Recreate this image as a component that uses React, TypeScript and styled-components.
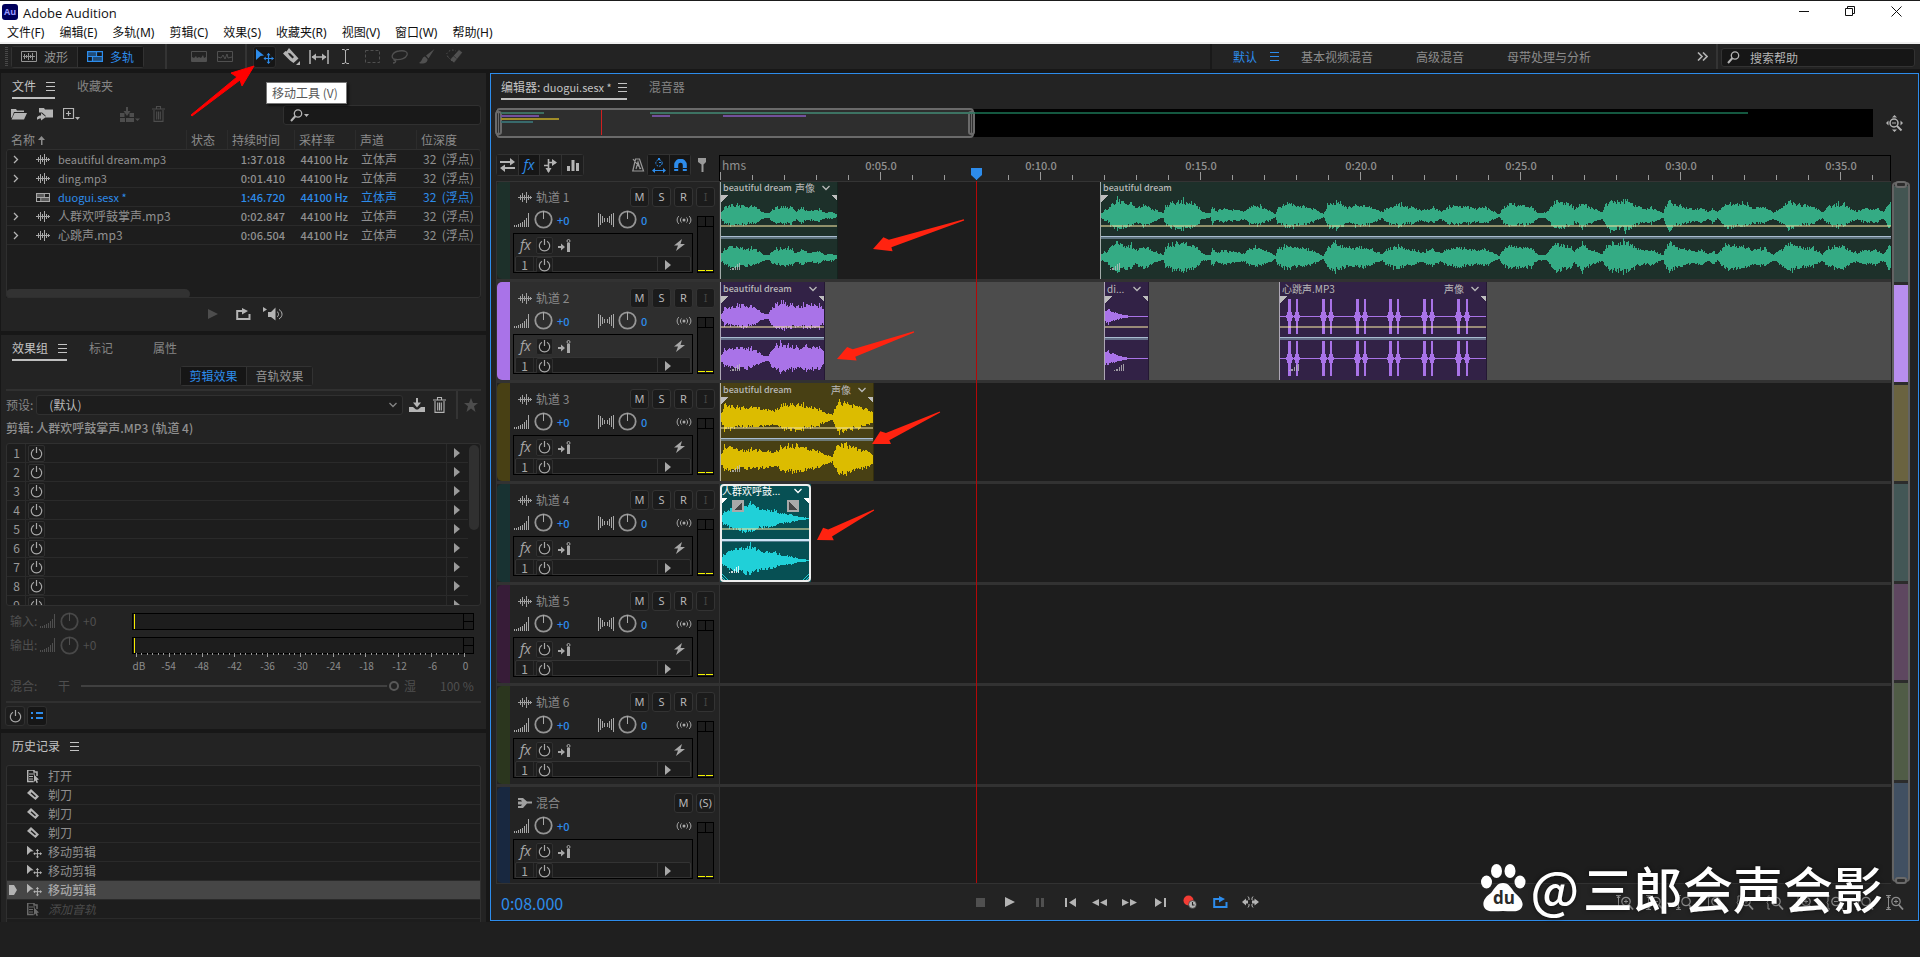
import React from 'react';
import styled, { createGlobalStyle, css } from 'styled-components';

const BLUE = '#2d8ceb';
const PX_PER_SECOND = 32;
const UI = '"Noto Sans CJK SC", "Noto Sans", sans-serif';

const GlobalStyle = createGlobalStyle`
  *, *::before, *::after { box-sizing: border-box; }
  body { margin: 0; background: #1f1f1f; color: #9a9a9a; font: 12px/18px ${UI}; }
  button, input, select { font: inherit; color: inherit; margin: 0; padding: 0; border: 0; background: none; border-radius: 0; }
  svg { display: block; flex: none; }
`;

/* ---------- icons ---------- */

type SvgProps = { w: number; h: number; children: React.ReactNode };
const Svg = ({ w, h, children }: SvgProps) => (
  <svg width={w} height={h} viewBox={`0 0 ${w} ${h}`} fill="currentColor" aria-hidden="true">{children}</svg>
);
const line = { fill: 'none', stroke: 'currentColor' } as const;

const MenuIcon = () => <Svg w={9} h={9}><path d="M0 0h9v1H0zM0 4h9v1H0zM0 8h9v1H0z" /></Svg>;
const Chevron = () => <Svg w={8} h={6}><path d="M.5 1l3.500 3.500L7.500 1" {...line} strokeWidth="1.300" /></Svg>;
const ChevronRight = () => <Svg w={6} h={9}><path d="M1 1l3.500 3.500L1 8" {...line} strokeWidth="1.300" /></Svg>;
const Power = () => <Svg w={13} h={13}><path d="M4 2.200a5.200 5.200 0 1 0 5 0M6.500 0v6" {...line} strokeWidth="1.200" /></Svg>;
const Triangle = () => <Svg w={6} h={10}><path d="M0 0l6 5-6 5z" /></Svg>;
const WaveSmall = () => <Svg w={14} h={11}><path d="M0 5h14v1H0zM2 3h1v5H2zM4 1h1v9H4zM6 3h1v5H6zM8 0h1v11H8zM10 3h1v5h-1zM12 4h1v3h-1z" /></Svg>;
const SessionIcon = ({ w = 14, h = 9 }) => (
  <svg width={w} height={h} viewBox="0 0 16 11" preserveAspectRatio="none" fill="none" stroke="currentColor" strokeWidth="1.200" aria-hidden="true">
    <path d="M.6.6h14.800v9.800H.6zM0 5.500h16M9.500 1v4M5.500 6v4" /><path d="M1 1h8v4H1zM6 6h9v4H6z" fill="currentColor" opacity=".45" stroke="none" />
  </svg>
);
const WaveBox = () => <Svg w={16} h={11}><path d="M.5.5h15v10H.5z" {...line} /><path d="M2 5h12v1H2zM3 3h1v5H3zM5 4h1v3H5zM7 2h1v7H7zM9 4h1v3H9zM11 2h1v7h-1z" /></Svg>;
const SpectrumBox = () => <Svg w={16} h={11}><path d="M.5.5h15v10H.5z" {...line} /><path d="M1 10V6l2 1 2-2 1 2 2-1 2 1 2-3 1 3 2-1v4z" /></Svg>;
const PitchBox = () => <Svg w={16} h={11}><path d="M.5.5h15v10H.5zM1 6l3 1 2-3 2 4 2-5 1 4 4-1" {...line} /></Svg>;
const MoveTool = ({ big = false }) => (
  <svg width={big ? 18 : 15} height={big ? 15 : 14} viewBox="0 0 18 15" fill="currentColor" aria-hidden="true">
    <path d="M0 0l8 6.500-3.500.5L0 11z" /><path d="M12.500 4.500v9M8.500 9.500h9" {...line} strokeWidth="1.200" />
    <path d="M12.500 4l2 2.200h-4zM12.500 15l2-2.200h-4zM7.500 9.500l2.200-2v4zM17.800 9.500l-2.200-2v4z" />
  </svg>
);
const Razor = () => <Svg w={18} h={18}><path d="M6 0L15.500 10.500 10.500 15 7 12.500 0 5.500 2.500 3l1 .5zM5 4.800L6 7l3.500 3.500L11 9 7.500 5.500z" fillRule="evenodd" /><path d="M17 13v4h-4z" /></Svg>;
const RazorSmall = () => <Svg w={12} h={12}><path d="M4 0l8 7.500L8.500 11 0 4zM4.500 3.200l-1 1 4.500 4 1-1z" fillRule="evenodd" /></Svg>;
const TimeSel = () => <Svg w={20} h={14}><path d="M1 0v14M19 0v14M3 7h14" {...line} strokeWidth="1.500" /><path d="M2.500 7L7 3.500v7zM17.500 7L13 3.500v7z" /></Svg>;
const IBeam = () => <Svg w={9} h={15}><path d="M1 .5h2l1.500 1L6 .5h2M1 14.500h2l1.500-1 1.500 1h2M4.500 1v13" {...line} /></Svg>;
const Marquee = () => <Svg w={15} h={13}><path d="M.5.5h14v12H.5z" {...line} strokeDasharray="3 2" /></Svg>;
const Lasso = () => <Svg w={18} h={14}><path d="M4 9.500C-1 8 1 2 8 1c6-1 9 1 8 4-1 3-6 5-11 4.500C3 8 2 11 4.500 10.500 5 12 4 13 2 13" {...line} strokeWidth="1.300" /></Svg>;
const Brush = () => <Svg w={16} h={15}><path d="M15.500 0L7 6.500l2.500 3zM6 7.500c-3 0-2 4-6 6.500 4 1.500 9 0 8.500-4z" /></Svg>;
const Heal = () => <Svg w={18} h={16}><path d="M14 .5l3.500 3L9 14l-4-3.500zM8 6.500l3.500 3" stroke="#232323" strokeWidth=".6" /><path d="M7 12L3 8M3 8l-1.500-3L4 2l4-1 3 1" {...line} strokeDasharray="1.500 2" /></Svg>;
const Magnifier = () => <Svg w={13} h={13}><circle cx="8" cy="4.500" r="3.700" {...line} strokeWidth="1.300" /><path d="M5.500 7L1 12" {...line} strokeWidth="2" /></Svg>;
const Folder = () => <Svg w={16} h={12}><path d="M0 1h5l1 1.500h7V4H3L1 9.500H0z" /><path d="M3.500 5H16l-3 6.500H.500z" /></Svg>;
const ImportIcon = () => <Svg w={16} h={14}><path d="M2 1h5l1 1.500h8v8h-7.500V8.500L5 5.500H2z" /><path d="M0 13V10.500C1 9 2 8.500 4 8.500V6l5 4-5 3.500v-2c-2 0-3 .5-4 1.500z" /></Svg>;
const NewFile = () => <Svg w={17} h={13}><path d="M.5.5h10v10H.5zM3 5.500h5M5.500 3v5" {...line} strokeWidth="1.200" /><path d="M12 9h5l-2.500 3z" /></Svg>;
const InsertIcon = () => <Svg w={20} h={15}><path d="M0 6h4.500v4H0zM9.500 6H14v4H9.500zM0 11h5v4H0zM6 11h8v4H6zM8 0v4h2.500L7 9 3.500 4H6V0zM15 11.500h5L17.500 14z" /></Svg>;
const Trash = () => <Svg w={13} h={16}><path d="M0 3h13M4.500 2.500v-2h4v2M2 4v11.400h9V4M4.700 5.500v8M6.500 5.500v8M8.300 5.500v8" {...line} strokeWidth="1.100" /></Svg>;
const SaveIcon = () => <Svg w={16} h={14}><path d="M0 9h4l3 2.500h2L12 9h4v5H0zM7 0h2v4.500h3L8 9.500 4 4.500h3z" /></Svg>;
const Star = () => <Svg w={14} h={14}><path d="M7 0l2 5h5l-4 3.300L11.500 14 7 10.500 2.500 14 4 8.300 0 5h5z" /></Svg>;
const Play = () => <Svg w={10} h={10}><path d="M0 0l10 5-10 5z" /></Svg>;
const Loop = () => <Svg w={15} h={12}><path d="M6 3H1.200v8h12.300V6" {...line} strokeWidth="2" /><path d="M6 0l6 3-6 3.500z" /></Svg>;
const Speaker = () => <Svg w={21} h={14}><path d="M0 0l4 2.500L0 5zM5 5h3l4.500-4.500v13L8 10H5z" /><path d="M14 4.500c2 1.500 2 4 0 5.500M16 2.500c4 2.500 4 7 0 9.500" {...line} /></Svg>;
const Bars = () => <Svg w={16} h={14}><path d="M0 12h1v2H0zM2 12h1v2H2zM4 11h1v3H4zM6 10h1v4H6zM8 9h1v5H8zM10 7h1v7h-1zM12 5h1v9h-1zM14 0h1v14h-1z" /></Svg>;
const Balance = () => <Svg w={16} h={14}><path d="M0 0h1v14H0zM2 1h1v11H2zM4 3h1v7H4zM6 5h1v4H6zM9 5h1v4H9zM11 3h1v7h-1zM13 1h1v11h-1zM15 0h1v14h-1z" /></Svg>;
const Knob = () => <Svg w={19} h={19}><circle cx="9.500" cy="9.500" r="8.200" {...line} strokeWidth="1.800" opacity=".85" /><path d="M9 1h1v8H9z" /></Svg>;
const Monitor = () => <Svg w={16} h={10}><circle cx="8" cy="5" r="1.500" /><path d="M5.500 2.500c-1.500 1.500-1.500 3.500 0 5M3 1C.5 3 .5 7 3 9M10.500 2.500c1.500 1.500 1.500 3.500 0 5M13 1c2.500 2 2.500 6 0 8" {...line} /></Svg>;
const Bolt = () => <Svg w={11} h={12}><path d="M8 0L0 6.500h4L2 12l9-7H6.500z" /></Svg>;
const PrePost = () => <Svg w={13} h={13}><path d="M0 7h3V4.500L7 8l-4 3.500V9H0z" /><path d="M9 4h3v9H9z" /><circle cx="10.500" cy="2" r="1.500" {...line} /></Svg>;
const MixIcon = () => <Svg w={14} h={12}><path d="M0 1h5l4 3.500h5v2H9L5 11H0V9h3l1-1.500H0v-3h4L3 3H0z" /></Svg>;
const Swap = () => <Svg w={15} h={14}><path d="M0 3h10V0l5 4-5 3.500V5H0zM15 9H5V6.500L0 10l5 4v-3h10z" /></Svg>;
const Sends = () => <Svg w={13} h={15}><path d="M4.500 1v13M4.500 7.500H0M5 4.500h5M10.500 4v2" {...line} strokeWidth="1.600" /><path d="M8 1l5 3.500L8 8zM1.500 10h6l-3 5z" /></Svg>;
const Eq = () => <Svg w={12} h={12}><path d="M0 7h3v5H0zM4.500 1h3v11h-3zM9 4h3v8H9z" /></Svg>;
const Metronome = () => <Svg w={13} h={14}><path d="M3.500 1h4l4 12H.800zM1 1l8 10M4 11l2-7 2 7" {...line} strokeWidth="1.200" /></Svg>;
const Stopwatch = () => <Svg w={14} h={15}><circle cx="7" cy="5" r="3.200" {...line} strokeDasharray="2 1" /><path d="M6 0h2v2H6zM7 4h2v1H7z" /><path d="M1 12.500h12" {...line} /><path d="M0 12.500L3 10v5zM14 12.500L11 10v5z" /></Svg>;
const Magnet = () => <Svg w={13} h={13}><path d="M2.200 12V6a4.200 4.200 0 0 1 8.600 0v6" {...line} strokeWidth="4" /><path d="M0 9.500h4.500M8.500 9.500H13" stroke="#161616" /></Svg>;
const Pin = () => <Svg w={9} h={14}><path d="M0 0h8v4L5.500 6.500V14h-2V6.500L0 4z" /></Svg>;
const ZoomOutFull = () => <Svg w={17} h={17}><circle cx="8" cy="8" r="4" {...line} strokeWidth="1.500" /><path d="M6 7.500h4v1H6zM8.500 0L11 2.500H6zM8.500 17L6 14.500h5zM0 8l2.500-2.500v5zM17 8l-2.500-2.500v5z" /><path d="M11 11l4.500 4.500" {...line} strokeWidth="2" /></Svg>;
const ListIcon = () => <Svg w={12} h={8}><path d="M0 0h2v2H0zM5 0h7v2H5zM0 5h2v2H0zM5 5h7v2H5z" /></Svg>;
const DocIcon = () => <Svg w={12} h={13}><path d="M0 0h7v2h3v4M.7 0v11.500h6" {...line} strokeWidth="1.500" /><path d="M2 3.500h6v1H2zM2 6h4v1H2zM2 8.500h4v1H2zM7 4.500l5 5-2 .5 1 2.500-1.500.5-1-2.500L7 12z" /></Svg>;
const FxIcon = () => <FxText>fx</FxText>;
const ZoomGlyph = ({ kind }: { kind: number }) => (
  <Svg w={18} h={15}>
    <circle cx="10" cy="6.500" r="4.200" {...line} strokeWidth="1.200" />
    <path d="M13 10l4 4.500" {...line} strokeWidth="1.800" />
    {(kind % 3 !== 2 || kind === 9) && <path d={kind % 2 && kind < 9 ? 'M8 6.500h4' : 'M8 6.500h4M10 4.500v4'} {...line} />}
    <path d={kind > 3 && kind < 8 ? 'M4 1H2v5L1 7.500 2 9v5h2' : 'M2.500 1v13M0 .5h5M0 14.500h5M1 3l1.500-2L4 3M1 12l1.500 2L4 12'} {...line} />
  </Svg>
);

/* ---------- shared parts ---------- */

const Root = styled.div`position: relative; min-height: 100vh; overflow: hidden; border-top: 1px solid #1b1b1b;`;

const TitleBar = styled.header`display: flex; align-items: center; height: 20px; padding: 0 1px 0 2px; background: #fff; color: #111;`;
const AppLogo = styled.span`width: 16px; height: 16px; margin-top: 2px; border-radius: 3px; background: #00005b; color: #9999ff; font: bold 9px/15px "Open Sans", sans-serif; text-align: center;`;
const AppName = styled.span`margin: 4px auto 0 5px; font: 13px/16px "Open Sans", sans-serif;`;
const WindowButton = styled.button`display: grid; place-items: center; width: 46px; height: 20px;`;
const MenuBar = styled.nav`display: flex; gap: 15px; height: 23px; padding: 3px 0 0 7px; border-bottom: 2px solid #f0f0f0; background: #fff; color: #111;`;
const MenuItem = styled.button`height: 18px; font: 12px/18px "Noto Sans", "Noto Sans CJK SC", sans-serif; white-space: nowrap;`;

const Toolbar = styled.div`display: flex; align-items: center; height: 25px; padding: 0 5px; background: #232323; color: #b4b4b4;`;
const Grip = styled.span`width: 3px; height: 19px; margin-right: 3px; background: repeating-linear-gradient(#484848 0 1px, transparent 1px 2px);`;
const Segments = styled.div`display: flex; border: 1px solid #323232; border-radius: 3px;`;
const Segment = styled.button<{ $on?: boolean; $w: number; $h?: number }>`
  display: flex; align-items: center; justify-content: center; gap: 7px;
  width: ${p => p.$w}px; height: ${p => p.$h || 20}px;
  color: ${p => (p.$on ? BLUE : '#949494')}; background: ${p => (p.$on ? '#161616' : '#1e1e1e')};
  & + & { border-left: 1px solid #323232; }
`;
const IconSegment = styled(Segment)`color: ${p => (p.$on ? BLUE : '#b4b4b4')};`;
const VRule = styled.span<{ $left?: number; $right?: number }>`
  align-self: stretch; width: 2px; margin: 0 ${p => p.$right || 0}px 0 ${p => p.$left || 0}px; background: #343434;
`;
const ToolButton = styled.button<{ $on?: boolean; $dim?: boolean; $w?: number }>`
  display: grid; place-items: center; width: ${p => p.$w || 23}px; height: 22px;
  color: ${p => (p.$on ? BLUE : p.$dim ? '#505050' : '#b4b4b4')};
  ${p => p.$on && css`background: #161616; border-radius: 3px; box-shadow: inset 0 0 0 1px #2c2c2c;`}
`;
const ToolSet = styled.div`display: flex; gap: 4px;`;
const Workspaces = styled.nav`display: flex; align-items: center; gap: 43px; width: 506px; height: 25px; margin-left: auto; padding: 0 8px 0 21px; border-left: 2px solid #191919; color: #8c8c8c;`;
const WorkspaceLink = styled.button<{ $on?: boolean }>`
  display: flex; align-items: center; gap: 13px; white-space: nowrap;
  ${p => p.$on && css`color: ${BLUE}; margin-right: -21px;`}
`;
const More = styled.button`margin-left: auto; color: #b4b4b4;`;
const HelpSearch = styled.label`
  display: flex; align-items: center; gap: 10px; width: 194px; height: 19px; margin-top: 2px; padding-left: 5px;
  border: 1px solid #323232; border-radius: 3px; background: #161616;
  input { width: 150px; height: 17px; outline: 0; } input::placeholder { color: #b4b4b4; opacity: 1; }
`;

const Workspace = styled.main`display: flex; gap: 4px; padding: 4px 1px 0; background: #171717;`;
const LeftColumn = styled.div`display: flex; flex-direction: column; gap: 4px; width: 485px; flex: none;`;
const Panel = styled.section<{ $h?: number }>`
  background: #232323; padding: 0 5px; overflow: hidden;
  ${p => (p.$h ? css`height: ${p.$h}px;` : css`flex: 1;`)}
`;
const Tabs = styled.div`display: flex; gap: 22px; height: 28px; padding: 0 6px;`;
const Tab = styled.button<{ $on?: boolean; $plain?: boolean; $push?: number }>`
  display: flex; align-items: center; gap: 10px; height: 26px; margin-left: ${p => p.$push || 0}px; padding-top: 2px; white-space: nowrap;
  color: ${p => (p.$on ? '#c4c4c4' : '#858585')};
  border-bottom: 2px solid ${p => (p.$on && !p.$plain ? '#c0c0c0' : 'transparent')};
`;
const Latin = styled.span`font-size: 11px;`;

/* ---------- files panel ---------- */

const FileTools = styled.div`
  display: flex; align-items: center; gap: 10px; height: 26px; padding-left: 5px; color: #b4b4b4;
`;
const PlainButton = styled.button<{ $dim?: boolean; $push?: number }>`
  display: grid; place-items: center; margin-left: ${p => p.$push || 0}px; color: ${p => (p.$dim ? '#4d4d4d' : '#b4b4b4')};
`;
const FilterBox = styled.label`
  display: flex; align-items: center; gap: 1px; width: 198px; height: 20px; margin: 2px 0 0 auto; padding-left: 6px;
  border: 1px solid #303030; border-radius: 3px; background: #191919;
  input { width: 160px; outline: 0; }
`;
const FileBox = styled.div`position: relative; height: 168px; margin-top: 3px; overflow: hidden; &::after { content: ""; position: absolute; inset: 19px 0 0; border: 1px solid #2f2f2f; border-radius: 3px; pointer-events: none; }`;
const FileTable = styled.table`
  width: 100%; table-layout: fixed; border-collapse: separate; border-spacing: 0;
  th { height: 20px; padding: 0 0 0 5px; text-align: left; font-weight: 400; line-height: 16px; color: #8c8c8c; }
  th + th { padding: 0 0 0 4px; border-left: 1px solid #2c2c2c; }
  th svg { display: inline-block; margin-left: 3px; }
  td { height: 19px; padding: 0; background: #1d1d1d; border-bottom: 1px solid #2a2a2a; white-space: nowrap; line-height: 18px; }
`;
const FileRow = styled.tr<{ $on?: boolean }>`
  color: ${p => (p.$on ? BLUE : '#909090')};
  td:nth-child(3), td:nth-child(4) { text-align: right; font-size: 11px; font-weight: 500; }
  td:nth-child(3) { padding-right: 9px; } td:nth-child(4) { padding-right: 7px; }
  td:nth-child(5) { padding-left: 6px; } td:nth-child(6) { padding-left: 7px; }
`;
const FileName = styled.span`
  display: flex; align-items: center; padding-left: 7px; color: inherit;
  > i { width: 23px; color: #b4b4b4; } > b { width: 22px; color: #a8a8a8; }
`;
const TableFill = styled.div`height: 54px; background: #1d1d1d; display: flex; align-items: flex-end;`;
const ScrollThumb = styled.span`width: 184px; height: 10px; border-radius: 5px; background: #323232;`;
const PreviewBar = styled.div`display: flex; align-items: center; height: 31px; padding-left: 202px; gap: 18px;`;

const files = [
  { name: 'beautiful dream.mp3', len: '1:37.018', latin: true },
  { name: 'ding.mp3', len: '0:01.410', latin: true },
  { name: 'duogui.sesx *', len: '1:46.720', session: true, latin: true },
  { name: '人群欢呼鼓掌声.mp3', len: '0:02.847' },
  { name: '心跳声.mp3', len: '0:06.504' },
];

const FilesPanel = () => (
  <Panel $h={258}>
    <Tabs>
      <Tab $on>文件<MenuIcon /></Tab>
      <Tab>收藏夹</Tab>
    </Tabs>
    <FileTools>
      <PlainButton aria-label="打开"><Folder /></PlainButton>
      <PlainButton aria-label="导入"><ImportIcon /></PlainButton>
      <PlainButton aria-label="新建"><NewFile /></PlainButton>
      <PlainButton aria-label="插入" $dim $push={30}><InsertIcon /></PlainButton>
      <PlainButton aria-label="删除" $dim $push={2}><Trash /></PlainButton>
      <FilterBox><Magnifier /><Svg w={5} h={3}><path d="M0 0h5L2.500 3z" /></Svg><input aria-label="筛选文件" /></FilterBox>
    </FileTools>
    <FileBox>
      <FileTable>
        <colgroup><col /><col width="41" /><col width="67" /><col width="61" /><col width="61" /><col width="65" /></colgroup>
        <thead><tr>
          <th>名称<Svg w={7} h={9}><path d="M3 9V4H0l3.500-4L7 4H4.500v5z" /></Svg></th>
          <th>状态</th><th>持续时间</th><th>采样率</th><th>声道</th><th>位深度</th>
        </tr></thead>
        <tbody>
          {files.map(f => (
            <FileRow key={f.name} $on={f.session}>
              <td><FileName><i>{!f.session && <ChevronRight />}</i><b>{f.session ? <SessionIcon /> : <WaveSmall />}</b>{f.latin ? <Latin>{f.name}</Latin> : f.name}</FileName></td>
              <td /><td>{f.len}</td><td>44100 Hz</td><td>立体声</td><td>32&nbsp; (浮点)</td>
            </FileRow>
          ))}
        </tbody>
      </FileTable>
      <TableFill><ScrollThumb /></TableFill>
    </FileBox>
    <PreviewBar>
      <PlainButton aria-label="播放" $dim><Play /></PlainButton>
      <PlainButton aria-label="循环播放"><Loop /></PlainButton>
      <PlainButton aria-label="自动播放" $push={-6}><Speaker /></PlainButton>
    </PreviewBar>
  </Panel>
);

/* ---------- effects rack ---------- */

const Centered = styled.div`display: flex; justify-content: center; margin: 3px 0 3px 6px;`;
const HRule = styled.div`height: 2px; background: #303030;`;
const PresetRow = styled.div`display: flex; align-items: center; height: 28px; color: #858585;`;
const PresetSelect = styled.span`
  position: relative; width: 367px; height: 20px; margin: 0 6px 0 3px; border: 1px solid #303030; border-radius: 3px; background: #1d1d1d;
  select { appearance: none; width: 100%; height: 18px; padding-left: 12px; color: #b8b8b8; outline: 0; }
  svg { position: absolute; right: 5px; top: 6px; }
`;
const ClipTitle = styled.div`height: 24px; color: #909090; font-weight: 500; line-height: 18px;`;
const RackBox = styled.div`position: relative; height: 163px; margin-bottom: 3px; overflow: hidden; border: 1px solid #303030; border-radius: 3px; background: #1d1d1d;`;
const RackRow = styled.div`
  display: flex; align-items: center; width: 461px; height: 19px; border-bottom: 1px solid #2a2a2a;
  > span { width: 19px; padding-right: 5px; text-align: right; border-right: 1px solid #2a2a2a; line-height: 18px; }
  > button:nth-child(2) { margin-left: 2px; } > button:last-child { width: 22px; height: 18px; padding-left: 7px; margin-left: auto; border-left: 1px solid #2a2a2a; }
`;
const PowerButton = styled.button`
  display: grid; place-items: center; width: 17px; height: 17px; border: 1px solid #303030; border-radius: 2px; color: #a8a8a8; background: #1d1d1d;
`;
const RackThumb = styled.span`position: absolute; right: 1px; top: 1px; width: 10px; height: 85px; border-radius: 5px; background: #303030;`;
const LevelRow = styled.div`
  display: flex; align-items: center; height: 24px; padding: 0 7px 0 4px; color: #4f4f4f; white-space: nowrap;
  > svg { margin-right: 4px; } > label { width: 30px; } > b { width: 49px; font-weight: 400; }
`;
const HMeter = styled.div`
  display: flex; flex: 1; height: 17px; border: 1px solid #000; background: #1d1d1d;
  &::before { content: ""; width: 1px; margin: 0 auto 0 1px; background: #f5ea00; }
  &::after { content: ""; width: 10px; border-left: 1px solid #000; background: linear-gradient(#000, #000) 0 7px / 100% 1px no-repeat; }
`;
const Scale = styled.div`height: 20px; margin: -4px 0 0 129px;`;
const ScaleLabels = styled.div`
  display: flex; margin: 1px 0 0 -16px; font-size: 10px; line-height: 14px; color: #8c8c8c;
  span { width: 33px; flex: none; text-align: center; } span:first-child { padding-left: 7px; }
`;
const MixRow = styled.label`
  display: flex; align-items: center; height: 26px; margin-bottom: 2px; padding-left: 4px; color: #4f4f4f;
  > span { width: 48px; } > b { width: 23px; font-weight: 400; } > em { width: 36px; margin-left: 5px; font-style: normal; }
`;
const Range = styled.input`
  appearance: none; width: 318px; height: 12px;
  &::-webkit-slider-runnable-track { height: 2px; margin: 5px 0; background: #404040; }
  &::-webkit-slider-thumb { appearance: none; width: 10px; height: 10px; margin-top: -4px; border: 2px solid #585858; border-radius: 5px; background: #232323; box-shadow: 0 0 0 2px #232323; }
`;
const RackFooter = styled.div`display: flex; gap: 2px; margin: 3px 0 0 -1px;`;
const FootButton = styled.button<{ $on?: boolean }>`
  display: grid; place-items: center; width: 20px; height: 20px; border: 1px solid #303030; border-radius: 3px;
  color: ${p => (p.$on ? BLUE : '#a8a8a8')}; background: ${p => (p.$on ? '#161616' : '#1d1d1d')};
`;
const dbLabels = ['dB', '-54', '-48', '-42', '-36', '-30', '-24', '-18', '-12', '-6', '0'];

const EffectsPanel = () => (
  <Panel $h={394}>
    <Tabs>
      <Tab $on>效果组<MenuIcon /></Tab>
      <Tab>标记</Tab>
      <Tab $push={18}>属性</Tab>
    </Tabs>
    <Centered><Segments>
      <Segment $on $w={65} $h={18}>剪辑效果</Segment>
      <Segment $w={66} $h={18}>音轨效果</Segment>
    </Segments></Centered>
    <HRule />
    <PresetRow>
      <label htmlFor="preset">预设:</label>
      <PresetSelect><select id="preset"><option>(默认)</option></select><Chevron /></PresetSelect>
      <PlainButton aria-label="保存预设"><SaveIcon /></PlainButton>
      <PlainButton aria-label="删除预设" $push={8}><Trash /></PlainButton>
      <VRule $left={10} $right={6} />
      <PlainButton aria-label="收藏" $dim><Star /></PlainButton>
    </PresetRow>
    <ClipTitle>剪辑: 人群欢呼鼓掌声.MP3 (轨道 4)</ClipTitle>
    <RackBox>
      {[1, 2, 3, 4, 5, 6, 7, 8, 9].map(n => (
        <RackRow key={n}><span>{n}</span><PowerButton aria-label={`效果 ${n} 开关`}><Power /></PowerButton><button aria-label={`选择效果 ${n}`}><Triangle /></button></RackRow>
      ))}
      <RackThumb />
    </RackBox>
    <LevelRow><label>输入:</label><Bars /><Knob /><b>+0</b><HMeter /></LevelRow>
    <LevelRow><label>输出:</label><Bars /><Knob /><b>+0</b><HMeter /></LevelRow>
    <Scale>
      <Svg w={330} h={5}>{Array.from({ length: 61 }, (_, i) => <rect key={i} x={Math.round(i * 5.46) + 1} y="0" width="1" height={i % 6 === 0 ? 4 : 2} />)}</Svg>
      <ScaleLabels>{dbLabels.map(l => <span key={l}>{l}</span>)}</ScaleLabels>
    </Scale>
    <MixRow><span>混合:</span><b>干</b><Range type="range" defaultValue={100} /><em>湿</em>100 %</MixRow>
    <HRule />
    <RackFooter><FootButton aria-label="效果组开关"><Power /></FootButton><FootButton $on aria-label="列表"><ListIcon /></FootButton></RackFooter>
  </Panel>
);

/* ---------- history ---------- */

const HistoryList = styled.ol`margin: 4px 0 0; padding: 1px 0 0; list-style: none; border: 1px solid #303030; border-bottom: 0; border-radius: 3px 3px 0 0; background: #1d1d1d; height: 157px;`;
const HistoryRow = styled.li<{ $on?: boolean; $dim?: boolean }>`
  display: flex; align-items: center; height: 19px; border-bottom: 1px solid #2a2a2a; color: #8f8f8f; line-height: 18px;
  > i { width: 20px; padding-left: 2px; color: #b4b4b4; } > span { width: 21px; color: #b4b4b4; }
  ${p => p.$on && css`background: #464646; color: #a6a6a6; font-weight: 500;`}
  ${p => p.$dim && css`color: #4a4a4a; font-style: italic; > span { color: #6a6a6a; }`}
`;
const history = [
  { icon: <DocIcon />, t: '打开' }, { icon: <RazorSmall />, t: '剃刀' }, { icon: <RazorSmall />, t: '剃刀' }, { icon: <RazorSmall />, t: '剃刀' },
  { icon: <MoveTool />, t: '移动剪辑' }, { icon: <MoveTool />, t: '移动剪辑' }, { icon: <MoveTool />, t: '移动剪辑', on: true }, { icon: <DocIcon />, t: '添加音轨', dim: true },
];
const HistoryPanel = () => (
  <Panel>
    <Tabs><Tab $on $plain>历史记录<MenuIcon /></Tab></Tabs>
    <HistoryList>
      {history.map((r, i) => (
        <HistoryRow key={i} $on={r.on} $dim={r.dim}>
          <i>{r.on && <Svg w={8} h={10}><path d="M0 0h5l3 5-3 5H0z" /></Svg>}</i><span>{r.icon}</span>{r.t}
        </HistoryRow>
      ))}
    </HistoryList>
  </Panel>
);

/* ---------- editor ---------- */

const Editor = styled.section`display: flex; flex-direction: column; flex: 1; min-width: 0; height: 848px; border: 1px solid ${BLUE}; background: #232323;`;
const EditorTabs = styled(Tabs)`height: 34px; padding: 0 10px; flex: none; > button { gap: 6px; }`;
const OverviewRow = styled.div`display: flex; align-items: center; height: 30px; padding: 0 15px 0 5px; gap: 13px;`;
const Overview = styled.div`position: relative; flex: 1; height: 28px; background: #000;`;
const OverviewWindow = styled.div`
  position: absolute; left: 0; top: -1px; width: 478px; height: 30px; border: 2px solid #6a6a6a; border-radius: 4px; background: #2e2e2e;
  &::before, &::after { content: ""; position: absolute; top: 1px; width: 7px; height: 24px; border: 2px solid #6a6a6a; border-radius: 3px; background: linear-gradient(90deg, #2e2e2e 1px, #6a6a6a 1px 2px, #2e2e2e 2px); }
  &::before { left: -3px; } &::after { right: -3px; }
`;
const OverviewStrip = styled.i`position: absolute; height: 2px;`;
const OverviewCursor = styled.i`position: absolute; left: 105px; top: 1px; width: 1px; height: 25px; background: #d02020;`;

const Body = styled.div`display: flex; margin-top: 13px; padding-left: 5px;`;
const Main = styled.div`position: relative; flex: 1; min-width: 0;`;
const HeadRow = styled.div`position: relative; z-index: 2; display: flex; height: 30px; box-shadow: 0 1px 0 #343434; clip-path: inset(0 0 -1px 0);`;
const HeadTools = styled.div`display: flex; align-items: center; width: 223px; padding: 0 12px 2px 0; flex: none;`;
const Snap = styled(Segments)`margin-left: 2px;`;
const HeadGap = styled.span`display: grid; place-items: center; width: 14px; margin-left: auto; color: #9a9a9a;`;
const PinGap = styled.span`width: 16px; padding-left: 7px;`;
const Ruler = styled.div`position: relative; flex: 1; margin-top: 4px; overflow: hidden; border: 1px solid #000; border-bottom: 0; color: #909090;`;
const Unit = styled.span`position: absolute; left: 2px; top: 0;`;
const TimeLabel = styled.span`position: absolute; top: 0; width: 60px; margin-left: -29px; font-size: 11px; font-weight: 500; text-align: center;`;
const Tick = styled.i<{ $major: boolean }>`position: absolute; bottom: 1px; width: 1px; height: ${p => (p.$major ? 8 : 5)}px; background: #9a9a9a;`;

const Track = styled.div<{ $last?: boolean }>`display: flex; height: ${p => (p.$last ? 97 : 101)}px; border-bottom: ${p => (p.$last ? 1 : 3)}px solid #323232;`;
const TrackHead = styled.div<{ $on?: boolean }>`position: relative; display: flex; width: 224px; flex: none; border-right: 1px solid #323232; border-left: 1px solid #323232; background: ${p => (p.$on ? '#2e2e2e' : '#232323')};`;
const ColorTab = styled.span<{ $c: string }>`width: 13px; border-radius: 5px 0 0 5px; background: ${p => p.$c};`;
const TrackBody = styled.div`flex: 1; padding: 6px 4px 0 3px;`;
const NameRow = styled.div`display: flex; align-items: center; gap: 3px; height: 20px; padding-left: 5px; color: #a0a0a0;`;
const TrackName = styled.span`flex: 1; padding-left: 1px; line-height: 16px; color: #8a8a8a;`;
const MiniButton = styled.button<{ $dim?: boolean }>`
  width: 19px; height: 20px; border: 1px solid #333; border-radius: 3px; background: #1b1b1b; color: ${p => (p.$dim ? '#444' : '#b8b8b8')};
  font: 11px/18px "Noto Sans", sans-serif; text-align: center;
`;
const Lower = styled.div`display: flex; gap: 4px;`;
const Controls = styled.div`width: 180px;`;
const KnobRow = styled.div`
  display: flex; align-items: center; height: 26px; padding: 0 1px 1px; color: #a8a8a8;
  > b { width: 13px; margin-left: 4px; color: ${BLUE}; font-size: 11px; font-weight: 500; white-space: nowrap; } > svg + svg { margin-left: 4px; } > svg:last-child { margin-left: auto; }
`;
const PanGroup = styled.span`display: flex; gap: 4px; align-items: center; margin-left: 28px; > b { color: ${BLUE}; font-size: 11px; font-weight: 500; }`;
const FxBox = styled.div`height: 40px; padding: 0 1px 1px; border: 1px solid #000; color: #a8a8a8; overflow: hidden;`;
const FxRow = styled.div`display: flex; align-items: center; gap: 5px; height: 22px; padding: 0 6px 0 5px; > svg:nth-child(4) { margin-left: auto; }`;
const FxText = styled.span`width: 10px; margin-right: 1px; font: italic 14px/16px "Open Sans", sans-serif;`;
const Slot = styled.div`
  display: flex; height: 16px; border: 1px solid #333; border-radius: 2px 2px 0 0; background: #1d1d1d;
  > span { width: 18px; padding-right: 5px; border-right: 1px solid #2c2c2c; text-align: right; line-height: 16px; } > button { margin: 0 0 0 2px; }
  > button:last-child { width: 33px; height: 16px; margin-left: auto; padding-left: 7px; border-left: 1px solid #333; }
`;
const VMeter = styled.div`
  width: 17px; height: 57px; margin-top: 9px; border: 1px solid #000;
  background: linear-gradient(#000, #000) 7px 0 / 1px 9px no-repeat, linear-gradient(#000, #000) 0 9px / 100% 1px no-repeat,
    linear-gradient(90deg, #f5f500 0 7px, transparent 7px 8px, #f5f500 8px) 0 53px / 100% 1px no-repeat, #1d1d1d;
`;
const Lane = styled.div<{ $on?: boolean }>`position: relative; flex: 1; min-width: 0; overflow: hidden; background: ${p => (p.$on ? '#4c4c4c' : '#1d1d1d')};`;

type Pt = [number, number];
const song: Pt[] = [[0, 3], [6, 6], [10, 12], [16, 17], [22, 13], [30, 12], [34, 7], [42, 12], [48, 9], [52, 6], [62, 2], [64, 10], [72, 14], [80, 15], [88, 14], [96, 10], [100, 4], [109, 2], [111, 9], [116, 4], [120, 7], [136, 5], [144, 4], [148, 9], [155, 10], [162, 8], [170, 4], [174, 1], [176, 8], [182, 10], [188, 13], [196, 10], [205, 9], [212, 7], [222, 1], [226, 10], [232, 14], [240, 13], [246, 9], [262, 11], [268, 9], [281, 3], [285, 8], [298, 12], [304, 9], [312, 8], [320, 5], [332, 8], [340, 4], [347, 9], [357, 10], [377, 7], [383, 9], [398, 1], [402, 8], [407, 12], [430, 9], [437, 2], [445, 3], [450, 10], [455, 15], [470, 11], [473, 6], [481, 14], [488, 9], [501, 3], [504, 11], [511, 15], [527, 15], [535, 10], [543, 7], [550, 8], [562, 2], [564, 10], [568, 16], [574, 11], [592, 6], [600, 8], [607, 3], [611, 7], [616, 3], [620, 8], [625, 13], [645, 11], [652, 8], [664, 8], [672, 3], [680, 8], [688, 15], [702, 10], [710, 10], [721, 3], [726, 9], [742, 12], [750, 6], [756, 4], [762, 7], [776, 7], [782, 3], [787, 12], [792, 15], [820, 12]];
const intro: Pt[] = [[0, 4], [5, 9], [10, 12], [20, 10], [28, 9], [35, 8], [42, 3], [48, 2], [50, 6], [56, 8], [62, 9], [70, 9], [75, 4], [80, 8], [86, 5], [92, 5], [97, 6], [103, 3], [110, 3], [118, 1]];
const purple: Pt[] = [[0, 3], [3, 8], [10, 10], [20, 12], [30, 10], [36, 7], [42, 3], [47, 2], [50, 9], [55, 12], [60, 16], [65, 13], [72, 12], [80, 10], [86, 14], [90, 12], [98, 11], [105, 6]];
const yellow: Pt[] = [[0, 5], [3, 12], [10, 13], [18, 10], [38, 10], [55, 7], [60, 13], [76, 14], [84, 12], [92, 10], [100, 7], [106, 4], [111, 2], [114, 11], [118, 16], [128, 14], [136, 11], [144, 9], [154, 4]];
const crowd: Pt[] = [[0, 1], [4, 6], [8, 9], [13, 12], [18, 13], [30, 15], [36, 12], [42, 10], [48, 9], [54, 8], [60, 5], [70, 4], [76, 2], [82, 1], [90, 0]];
const ding: Pt[] = [[0, 6], [2, 7], [6, 5], [10, 4], [15, 2], [20, 1], [26, 0], [46, 0]];
const beats = [9, 17, 43, 51, 77, 85, 110, 118, 144, 152, 178, 187];

const wavePath = (env: Pt[], width: number, cy: number, seed: number) => {
  let s = seed;
  const rnd = () => { s = (s * 16807) % 2147483647; return s / 2147483647; };
  let k = 0;
  let top = `M0 ${cy}`;
  const bottom: string[] = [];
  for (let x = 0; x < width; x++) {
    while (k < env.length - 2 && env[k + 1][0] <= x) k++;
    const [x0, a0] = env[k];
    const [x1, a1] = env[Math.min(k + 1, env.length - 1)];
    const a = x1 > x0 ? a0 + ((a1 - a0) * Math.min(x - x0, x1 - x0)) / (x1 - x0) : a0;
    const spike = rnd() > 0.93 ? 0.2 : 0;
    top += `V${(cy - a * (0.72 + 0.34 * rnd() + spike)).toFixed(1)}H${x + 1}`;
    bottom.push(`V${(cy + 1 + a * (0.66 + 0.34 * rnd() + spike)).toFixed(1)}H${x}`);
  }
  return `${top}${bottom.reverse().join('')}Z`;
};
const beatPath = (cy: number, width: number) =>
  `M0 ${cy}h${width}v1H0z` + beats.map((b, i) => {
    const w = i % 2 ? 2 : 3;
    return `M${b - 3} ${cy - 1}h${w + 4}v3h-${w + 4}zM${b - 2} ${cy - 4}h${w + 2}v9h-${w + 2}zM${b - 1} ${cy - 17}h${w}v35h-${w}z`;
  }).join('');

const ClipBox = styled.article<{ $bg: string; $sel?: boolean }>`
  position: absolute; top: 0; height: 98px; overflow: hidden; background: ${p => p.$bg}; color: ${p => (p.$sel ? '#fff' : '#b9b9b9')};
  border-left: 1px solid #ffffff99; border-right: 1px solid #00000044;
  > svg { position: absolute; left: 0; top: 0; }
  ${p => p.$sel && css`border: 0; &::after { content: ""; position: absolute; inset: 0; border: 2px solid #eee; border-radius: 4px; }`}
`;
const ClipHead = styled.div<{ $end: number }>`
  position: relative; z-index: 1; display: flex; align-items: center; justify-content: space-between; height: 14px; width: ${p => p.$end}px; padding: 0 9px 0 2px;
  font-size: 10px; line-height: 14px; white-space: nowrap; > span:last-child { display: flex; align-items: center; gap: 7px; }
`;
const ClipName = styled.span<{ $latin: boolean }>`${p => p.$latin && css`font-size: 9px; font-weight: 500;`}`;
type ClipData = { at: number; w: number; name: string; pan?: boolean; menu?: boolean; env?: Pt[]; sel?: boolean; open?: boolean };
const Clip = ({ c, bg, fg }: { c: ClipData; bg: string; fg: string }) => (
  <ClipBox $bg={bg} $sel={c.sel} style={{ left: c.at * PX_PER_SECOND, width: c.w }}>
    <ClipHead $end={c.w}><ClipName $latin={c.name.startsWith('b')}>{c.name}</ClipName><span>{c.pan && '声像'}{c.menu && <Chevron />}</span></ClipHead>
    <svg width={c.w} height="98" shapeRendering="crispEdges" aria-hidden="true">
      <path fill={fg} d={c.env ? wavePath(c.env, c.w, 34, 77) + wavePath(c.env, c.w, 76, 4211) : beatPath(34, c.w) + beatPath(76, c.w)} />
      <rect y="44" width={c.w} height="2" fill="#efe0a0" opacity=".55" />
      <rect y="55" width={c.w} height="1" fill="#a9bcd0" /><rect y="56" width={c.w} height="2" fill="#7f98ac" opacity=".65" />
      {c.sel && <rect y="55" width={c.w} height="2" fill="#cfe4f6" />}
      <g fill={c.sel ? '#fff' : '#bdbdbd'}>
        <path d="M0 14h7L0 21z" />{!c.open && <path d={`M${c.w} 14h-8l8 8z`} />}
        <path opacity=".8" d="M9 88h1v1H9zM11 87h2v2h-2zM14 85h1v4h-1zM16 83h1v6h-1zM18 82h1v7h-1z" />
      </g>
      {c.sel && <g><rect x="12" y="16" width="12" height="12" fill="#a9a9a9" /><path d="M14 26h8V18z" fill="#444" /><rect x="67" y="16" width="12" height="12" fill="#a9a9a9" /><path d="M69 18v8h8z" fill="#444" /><path d="M2 90l7 7M2 93l4 4M89 90l-7 7M89 93l-4 4" stroke={fg} /></g>}
    </svg>
  </ClipBox>
);

const tracks: { name: string; tab: string; map: string; bg: string; fg: string; clips: ClipData[]; on?: boolean; mix?: boolean }[] = [
  { name: '轨道 1', tab: '#1d302a', map: '#435552', bg: '#1d302a', fg: '#34ab84', clips: [
    { at: 0, w: 118, name: 'beautiful dream', pan: true, menu: true, env: intro }, { at: 11.875, w: 1600, name: 'beautiful dream', env: [...song, ...song.map(([x, a]): Pt => [x + 821, a])], open: true }] },
  { name: '轨道 2', tab: '#a973e8', map: '#b88eee', bg: '#322246', fg: '#a973e8', on: true, clips: [
    { at: 0, w: 105, name: 'beautiful dream', menu: true, env: purple }, { at: 12, w: 45, name: 'di...', menu: true, env: ding }, { at: 17.46875, w: 208, name: '心跳声.MP3', pan: true, menu: true }] },
  { name: '轨道 3', tab: '#484014', map: '#6a6340', bg: '#484014', fg: '#dcbc00', clips: [{ at: 0, w: 154, name: 'beautiful dream', pan: true, menu: true, env: yellow }] },
  { name: '轨道 4', tab: '#183232', map: '#435756', bg: '#075054', fg: '#20d0d8', clips: [{ at: 0, w: 91, name: '人群欢呼鼓...', menu: true, env: crowd, sel: true }] },
  { name: '轨道 5', tab: '#371c38', map: '#5e4760', bg: '', fg: '', clips: [] },
  { name: '轨道 6', tab: '#2b361e', map: '#505c46', bg: '', fg: '', clips: [] },
  { name: '混合', tab: '#182840', map: '#415062', bg: '', fg: '', clips: [], mix: true },
];

const Playhead = styled.div`position: absolute; z-index: 3; top: 30px; bottom: 1px; width: 1px; background: #b40808; > svg { position: absolute; left: -5px; top: -13px; color: ${BLUE}; }`;
const SideMap = styled.div`position: relative; display: flex; flex-direction: column; gap: 3px; width: 18px; margin: 31px 8px 2px 1px; padding: 2px 0 1px; border: 2px solid #636363; background: #2c2c2c; border-radius: 4px;
  > b { position: absolute; left: 1px; width: 12px; height: 7px; border: 2px solid #6a6a6a; border-radius: 3px; background: #2c2c2c; }
  > b:nth-of-type(1) { top: -3px; } > b:nth-of-type(2) { bottom: -4px; }`;
const MapPart = styled.span<{ $c: string }>`flex: 1; background: ${p => p.$c};`;
const Footer = styled.footer`display: flex; align-items: center; height: 36px; padding: 0 8px 0 10px;`;
const TimeDisplay = styled.output`width: 464px; padding-top: 2px; color: ${BLUE}; font-size: 16px; line-height: 20px;`;
const TransportButton = styled.button<{ $c?: string }>`display: grid; place-items: center; width: 30px; height: 24px; color: ${p => p.$c || '#b4b4b4'};`;
const ZoomTools = styled.div`display: flex; margin-left: auto;`;

const transport: [string, React.ReactNode, string?][] = [
  ['停止', <Svg w={9} h={9}><path d="M0 0h9v9H0z" /></Svg>, '#505050'],
  ['播放', <Play />],
  ['暂停', <Svg w={9} h={9}><path d="M0 0h3v9H0zM5 0h3v9H5z" /></Svg>, '#505050'],
  ['转到开头', <Svg w={11} h={9}><path d="M0 0h2v9H0zM11 0v9L4 4.500z" /></Svg>],
  ['快退', <Svg w={16} h={7}><path d="M7 0v7L0 3.500zM15 0v7L8 3.500z" /></Svg>],
  ['快进', <Svg w={16} h={7}><path d="M0 0v7l7-3.500zM8 0v7l7-3.500z" /></Svg>],
  ['转到结尾', <Svg w={11} h={9}><path d="M9 0h2v9H9zM0 0v9l7-4.500z" /></Svg>],
  ['录制', <Svg w={14} h={14}><circle cx="5.500" cy="5.500" r="5" fill="#f23c34" /><circle cx="9.500" cy="9.500" r="3.900" stroke="#232323" strokeWidth=".6" /><path d="M9.500 7v3h2" fill="none" stroke="#232323" strokeWidth="1.100" /></Svg>],
  ['循环', <Loop />, BLUE],
  ['跳过', <Svg w={17} h={12}><path d="M0 6l4-3.500v2h2v3H4v2zM17 6l-4.500-3.500v2H10v3h2.500v2z" /><path d="M6 .5l1 1.500v2M6 11.500L7 10V8M11 .5L10 2v2M11 11.500L10 10V8" {...line} /></Svg>],
];

const LaneArrow = styled.svg`position: absolute; z-index: 4; overflow: visible; fill: #ff2310;`;
/* Annotation arrows: x and y of the tip inside the track area, and the vector from tip to tail. */
const arrows = [{ x: 377, y: 98, dx: 91, dy: -29 }, { x: 341, y: 208, dx: 77, dy: -27 }, { x: 376, y: 293, dx: 68, dy: -32 }, { x: 321, y: 389, dx: 57, dy: -30 }];
const arrowPath = ({ dx, dy }: { dx: number; dy: number }) => {
  const n = Math.hypot(dx, dy);
  const [ux, uy, l] = [dx / n, dy / n, Math.min(18, n * 0.23)];
  const p = (along: number, side: number) => `${(ux * along - uy * side).toFixed(1)} ${(uy * along + ux * side).toFixed(1)}`;
  return `M0 0L${p(l * 0.75, -8)}L${p(l, -4)}L${p(n, -0.7)}L${p(n, 0.5)}L${p(l, 4)}L${p(l, 8)}Z`;
};

const EditorPanel = () => (
  <Editor>
    <EditorTabs>
      <Tab $on><span>编辑器: <Latin>duogui.sesx *</Latin></span><MenuIcon /></Tab>
      <Tab>混音器</Tab>
    </EditorTabs>
    <OverviewRow>
      <Overview>
        <OverviewWindow />
        {([[5, 43, 3, '#3d6f60'], [5, 38, 6, '#72509c'], [5, 58, 9, '#a08c28'], [5, 32, 12, '#386a6c'], [154, 325, 3, '#3d7363'], [479, 773, 3, '#145840'], [156, 18, 6, '#72509c'], [227, 83, 6, '#72509c']] as const).map(([x, w, y, c], i) => (
          <OverviewStrip key={i} style={{ left: x, width: w, top: y, background: c }} />
        ))}
        <OverviewCursor />
      </Overview>
      <PlainButton aria-label="全部缩小"><ZoomOutFull /></PlainButton>
    </OverviewRow>
    <Body>
      <Main>
        <HeadRow>
          <HeadTools>
            <Segments>
              <IconSegment $w={21} aria-label="输入输出"><Swap /></IconSegment>
              <IconSegment $w={21} $on aria-label="效果"><FxIcon /></IconSegment>
              <IconSegment $w={22} aria-label="发送"><Sends /></IconSegment>
              <IconSegment $w={22} aria-label="均衡"><Eq /></IconSegment>
            </Segments>
            <HeadGap><Metronome /></HeadGap>
            <Snap><Segment $on $w={21} aria-label="节拍"><Stopwatch /></Segment><Segment $on $w={21} aria-label="对齐"><Magnet /></Segment></Snap>
            <PinGap><Pin /></PinGap>
          </HeadTools>
          <Ruler>
            <Unit>hms</Unit>
            {Array.from({ length: 37 }, (_, s) => (
              <React.Fragment key={s}>
                <Tick $major={s % 5 === 0} style={{ left: s * PX_PER_SECOND }} />
                {s > 0 && s % 5 === 0 && <TimeLabel style={{ left: s * PX_PER_SECOND }}>{`0:${String(s).padStart(2, '0')}.0`}</TimeLabel>}
              </React.Fragment>
            ))}
          </Ruler>
        </HeadRow>
        {tracks.map(t => (
          <Track key={t.name} $last={t.mix}>
            <TrackHead $on={t.on}>
              <ColorTab $c={t.tab} />
              <TrackBody>
                <NameRow>
                  {t.mix ? <MixIcon /> : <WaveSmall />}<TrackName>{t.name}</TrackName>
                  {(t.mix ? ['M', '(S)'] : ['M', 'S', 'R', 'I']).map(b => <MiniButton key={b} $dim={b === 'I'}>{b}</MiniButton>)}
                </NameRow>
                <Lower>
                  <Controls>
                    <KnobRow>
                      <Bars /><Knob /><b>+0</b>
                      {!t.mix && <PanGroup><Balance /><Knob /><b>0</b></PanGroup>}
                      <Monitor />
                    </KnobRow>
                    <FxBox>
                      <FxRow><FxIcon /><PowerButton aria-label="效果开关"><Power /></PowerButton><PrePost />{!t.mix && <Bolt />}</FxRow>
                      <Slot><span>1</span><PowerButton aria-label="效果 1 开关"><Power /></PowerButton><button aria-label="选择效果"><Triangle /></button></Slot>
                    </FxBox>
                  </Controls>
                  <VMeter />
                </Lower>
              </TrackBody>
            </TrackHead>
            <Lane $on={t.on}>{t.clips.map(c => <Clip key={c.at} c={c} bg={t.bg} fg={t.fg} />)}</Lane>
          </Track>
        ))}
        <Playhead style={{ left: 224 + 8 * PX_PER_SECOND }}><Svg w={11} h={12}><path d="M0 0h11v7l-5.500 5L0 7z" /></Svg></Playhead>
        {arrows.map(a => <LaneArrow key={a.x} width="1" height="1" style={{ left: a.x, top: a.y }}><path d={arrowPath(a)} /></LaneArrow>)}
      </Main>
      <SideMap>{tracks.map(t => <MapPart key={t.name} $c={t.map} />)}<b /><b /></SideMap>
    </Body>
    <Footer>
      <TimeDisplay>0:08.000</TimeDisplay>
      {transport.map(([label, icon, c]) => <TransportButton key={label} aria-label={label} $c={c}>{icon}</TransportButton>)}
      <ZoomTools>{Array.from({ length: 10 }, (_, i) => <TransportButton key={i} $c="#8c8c8c" aria-label={`缩放 ${i + 1}`}><ZoomGlyph kind={i} /></TransportButton>)}</ZoomTools>
    </Footer>
  </Editor>
);

/* ---------- overlays ---------- */

const Tooltip = styled.div`position: absolute; left: 266px; top: 81px; z-index: 5; width: 81px; height: 22px; padding-left: 5px; border: 1px solid #767676; background: #fff; color: #575757; line-height: 20px; white-space: nowrap; box-shadow: 2px 2px 2px #0008;`;
const PointerArrow = styled.svg`position: absolute; left: 190px; top: 64px; z-index: 5;`;
const Watermark = styled.div`
  position: absolute; right: 37px; top: 858px; z-index: 6; display: flex; align-items: center; gap: 4px;
  color: #fff; font-size: 50px; font-weight: 500; line-height: 56px; white-space: nowrap; text-shadow: 0 0 4px #0009; pointer-events: none;
`;
const Paw = styled.span`position: relative; width: 45px; height: 48px; margin-top: 2px; > b { position: absolute; left: 0; right: 0; top: 24px; color: #2a2a2a; font: bold 17px/20px "Open Sans", sans-serif; text-align: center; text-shadow: none; }`;

const App = () => (
  <>
    <GlobalStyle />
    <Root>
      <TitleBar>
        <AppLogo>Au</AppLogo><AppName>Adobe Audition</AppName>
        <WindowButton aria-label="最小化"><Svg w={10} h={10}><path d="M0 5h10v1H0z" /></Svg></WindowButton>
        <WindowButton aria-label="还原"><Svg w={10} h={10}><path d="M.5 2.500h7v7h-7zM2.500 2V.5h7v7H8" {...line} /></Svg></WindowButton>
        <WindowButton aria-label="关闭"><Svg w={11} h={11}><path d="M.5.5l10 10M10.500.5l-10 10" {...line} /></Svg></WindowButton>
      </TitleBar>
      <MenuBar>
        {['文件(F)', '编辑(E)', '多轨(M)', '剪辑(C)', '效果(S)', '收藏夹(R)', '视图(V)', '窗口(W)', '帮助(H)'].map(m => <MenuItem key={m}>{m}</MenuItem>)}
      </MenuBar>
      <Toolbar>
        <Grip />
        <Segments>
          <Segment $w={65}><WaveBox />波形</Segment>
          <Segment $w={66} $on><SessionIcon w={16} h={11} />多轨</Segment>
        </Segments>
        <VRule $left={21} $right={19} />
        <ToolButton $dim $w={26} aria-label="频谱"><SpectrumBox /></ToolButton>
        <ToolButton $dim $w={26} aria-label="音高"><PitchBox /></ToolButton>
        <VRule $left={7} $right={6} />
        <ToolSet>
          <ToolButton $on aria-label="移动工具"><MoveTool big /></ToolButton>
          <ToolButton aria-label="剃刀"><Razor /></ToolButton>
          <ToolButton aria-label="滑动"><TimeSel /></ToolButton>
          <ToolButton aria-label="时间选择"><IBeam /></ToolButton>
          <ToolButton $dim aria-label="框选"><Marquee /></ToolButton>
          <ToolButton $dim aria-label="套索"><Lasso /></ToolButton>
          <ToolButton $dim aria-label="画笔"><Brush /></ToolButton>
          <ToolButton $dim aria-label="污点修复"><Heal /></ToolButton>
        </ToolSet>
        <Workspaces>
          <WorkspaceLink $on>默认<MenuIcon /></WorkspaceLink>
          <WorkspaceLink>基本视频混音</WorkspaceLink>
          <WorkspaceLink>高级混音</WorkspaceLink>
          <WorkspaceLink>母带处理与分析</WorkspaceLink>
          <More aria-label="更多工作区"><Svg w={11} h={9}><path d="M1 .5l4 4-4 4M6 .5l4 4-4 4" {...line} strokeWidth="1.600" /></Svg></More>
        </Workspaces>
        <VRule $right={3} />
        <HelpSearch><Magnifier /><input aria-label="搜索帮助" placeholder="搜索帮助" /></HelpSearch>
      </Toolbar>
      <Workspace>
        <LeftColumn><FilesPanel /><EffectsPanel /><HistoryPanel /></LeftColumn>
        <EditorPanel />
      </Workspace>
      <Tooltip role="tooltip">移动工具 (V)</Tooltip>
      <PointerArrow width="66" height="52" aria-hidden="true"><path d="M1 50L2 51 50 15 52 21 64 1 41 8 47 12z" fill="#f00" stroke="#f00" strokeLinejoin="round" /></PointerArrow>
      <Watermark>
        <Paw>
          <Svg w={45} h={48}><ellipse cx="15.500" cy="7" rx="5.500" ry="7" /><ellipse cx="29" cy="7" rx="5.500" ry="7" /><ellipse cx="5.500" cy="18" rx="5.500" ry="6.500" /><ellipse cx="39" cy="18" rx="5.500" ry="6.500" /><path d="M22 19c6 0 8 5 12 10 6 5 9 10 7 14-3 6-11 4-19 4s-16 2-19-4c-2-5 1-10 7-14 4-5 6-10 12-10z" /></Svg>
          <b>du</b>
        </Paw>
        <span>@</span><span>三郎会声会影</span>
      </Watermark>
    </Root>
  </>
);

export default App;
